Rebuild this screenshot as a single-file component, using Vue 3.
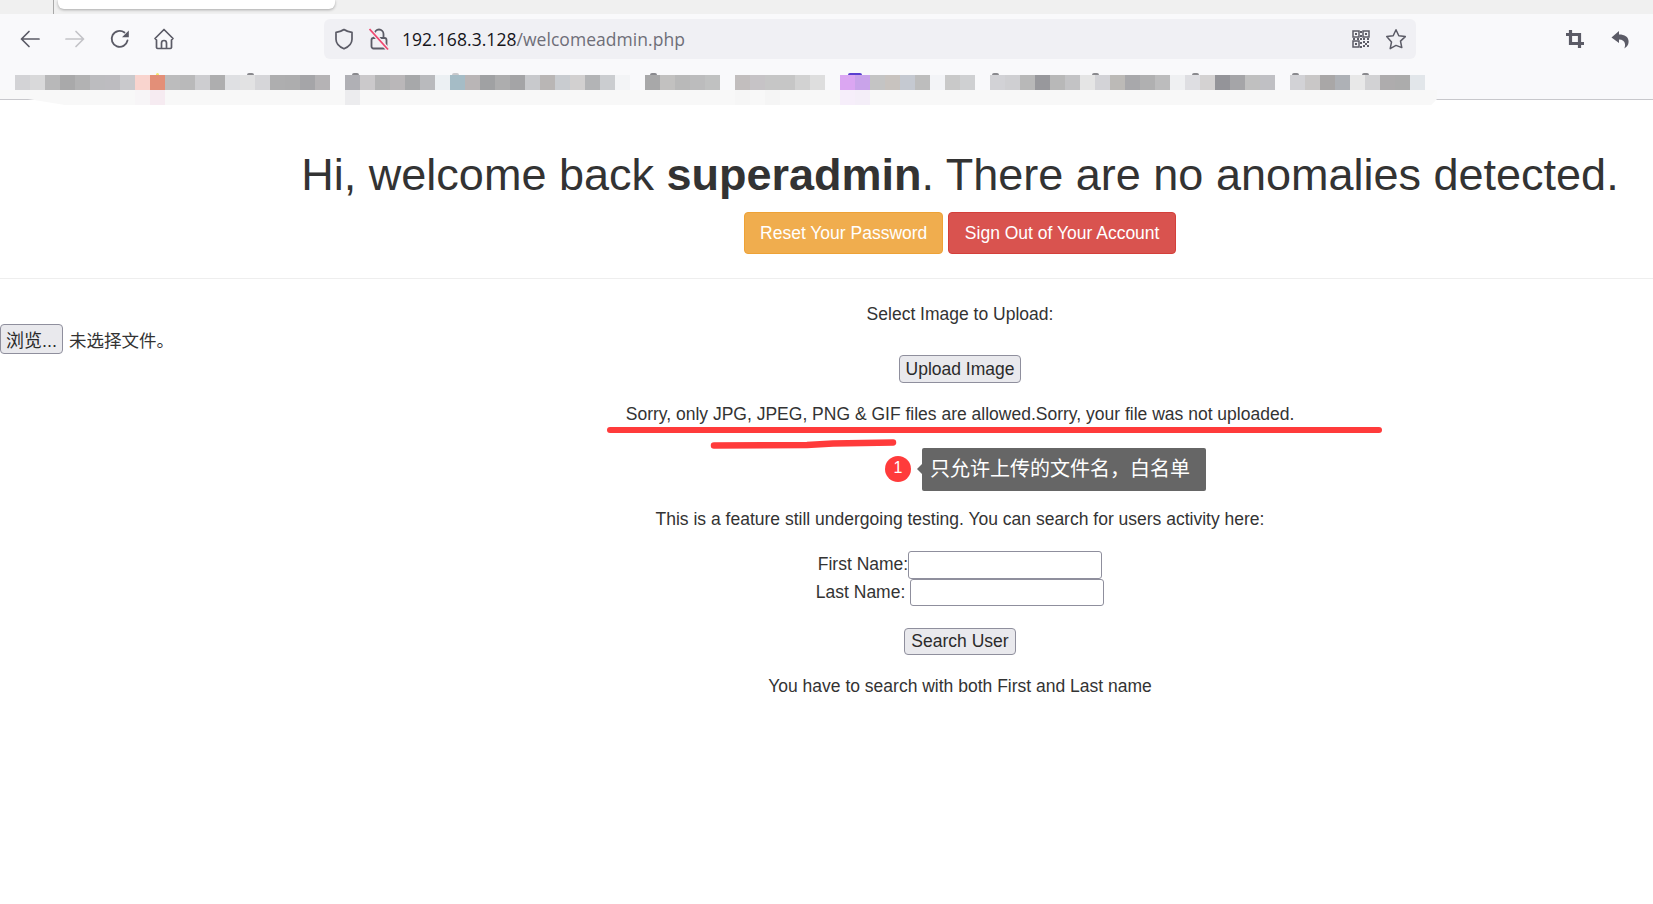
<template>
  <div class="screen">
    <div class="tab-strip">
      <span class="tab-sep"></span>
      <span class="tab"></span>
    </div>

    <header class="toolbar">
      <div class="nav-row">
        <div class="nav-btns">
          <span class="nav-btn">
            <svg width="24" height="24" viewBox="0 0 24 24" fill="none" stroke="#5b5b66" stroke-width="1.7" stroke-linecap="round" stroke-linejoin="round"><path d="M21 12H3.500M11 4.500 3.500 12l7.500 7.500" /></svg>
          </span>
          <span class="nav-btn">
            <svg width="24" height="24" viewBox="0 0 24 24" fill="none" stroke="#c3c3c8" stroke-width="1.7" stroke-linecap="round" stroke-linejoin="round"><path d="M3 12h17.500M13 4.500l7.500 7.500-7.500 7.500" /></svg>
          </span>
          <span class="nav-btn reload">
            <svg width="24" height="24" viewBox="0 0 24 24" fill="none" stroke="#5b5b66" stroke-width="1.8" stroke-linecap="round"><path d="M19.500 13.500A8 8 0 1 1 16.500 5.500" /><path d="M20.800 3.500v6.800H14z" fill="#5b5b66" stroke="none" /></svg>
          </span>
          <span class="nav-btn">
            <svg width="24" height="24" viewBox="0 0 24 24" fill="none" stroke="#5b5b66" stroke-width="1.7" stroke-linejoin="round"><path d="M12 2.500 3 11.500l1.500 1.500v7.500a1.500 1.500 0 0 0 1.500 1h12a1.500 1.500 0 0 0 1.500-1V13l1.500-1.500z" /><path d="M9.500 22v-6a2.500 2.500 0 0 1 5 0v6" /></svg>
          </span>
        </div>

        <div class="url-bar">
          <svg class="shield" width="22" height="24" viewBox="0 0 22 24" fill="none" stroke="#5b5b66" stroke-width="1.7" stroke-linejoin="round"><path d="M11 2.500c2.500 1.800 5 2.600 8 2.800v7c0 4.500-3.200 7.500-8 9.500-4.800-2-8-5-8-9.500v-7c3-.2 5.500-1 8-2.800z" /></svg>
          <svg class="lock" width="20" height="24" viewBox="0 0 20 24" fill="none" stroke-width="1.8"><path d="M5.500 11V7a4.500 4.500 0 0 1 9 0v4" stroke="#5b5b66" /><rect x="2.500" y="11" width="15" height="10.500" rx="2" stroke="#5b5b66" /><path d="M0.500 2 19 22.500" stroke="#f0f0f4" stroke-width="4" /><path d="M0.500 2 19 22.500" stroke="#ef476f" stroke-width="1.800" /></svg>
          <span class="url"><span class="url-host">192.168.3.128</span>/welcomeadmin.php</span>
          <svg class="qr" width="18" height="18" viewBox="0 0 18 18">
            <path fill="none" stroke="#5b5b66" stroke-width="1.500" d="M1 1h6v6H1zM11 1h6v6h-6zM1 11h6v6H1z" />
            <path fill="#5b5b66" d="M3 3h2v2H3zM13 3h2v2h-2zM3 13h2v2H3zM8 1h2v2H8zM8 5h2v2H8zM8 8h2v2H8zM1 8h2v2H1zM5 8h2v2H5zM11 8h2v2h-2zM15 8h2v2h-2zM8 12h2v2H8zM8 16h2v2H8zM11 11h2v2h-2zM15 11h2v2h-2zM13 13h2v2h-2zM11 15h2v2h-2zM15 15h2v2h-2z" />
          </svg>
          <svg class="star" width="22" height="22" viewBox="0 0 22 22" fill="none" stroke="#5b5b66" stroke-width="1.500" stroke-linejoin="round"><path d="m11 1.800 2.800 6 6.500.8-4.800 4.500 1.300 6.500L11 17.400l-5.800 3.200 1.300-6.500L1.700 8.600l6.500-.8z" /></svg>
        </div>

        <div class="nav-tools">
          <span class="nav-btn">
            <svg width="20" height="20" viewBox="0 0 20 20" fill="none" stroke="#5b5b66" stroke-width="3.200"><path d="M1 5.500h13.500V19M5.500 1v13.500H19" /></svg>
          </span>
          <span class="nav-btn">
            <svg width="20" height="20" viewBox="0 0 20 20" fill="#5b5b66"><path d="M9 2 1.500 8.500 9 14v-3.500c3.500 0 5.500 1.500 6 4.500.2 1.500 0 3-.8 4.500 3-1.500 4.800-4.500 4.300-8-.5-3.500-3.500-6-9.500-6z" /></svg>
          </span>
        </div>
      </div>

      <div class="bookmarks">
        <div v-for="(group, i) in bookmarkGroups" :key="i" class="bm-group">
          <span v-for="(c, j) in group" :key="j" class="bm-cell" :style="{ background: c }"></span>
        </div>
      </div>
    </header>

    <!-- strip of blur left under the bookmarks when the shot was edited -->
    <div class="blur-strip">
      <span v-for="s in stains" :key="s.x" class="stain" :style="{ left: s.x + 'px', width: s.w + 'px', background: s.c }"></span>
    </div>
    <span v-for="m in marks" :key="m.x" class="mark" :style="{ left: m.x + 'px', width: m.w + 'px', background: m.c }"></span>

    <main class="page">
      <h1 class="welcome">Hi, welcome back <b>superadmin</b>. There are no anomalies detected.</h1>
      <div class="actions">
        <a class="btn btn-warning">Reset Your Password</a>
        <a class="btn btn-danger">Sign Out of Your Account</a>
      </div>
      <hr class="rule" />

      <form class="upload" @submit.prevent>
        <p class="upload-label">Select Image to Upload:</p>
        <div class="file-row">
          <button type="button" class="native file-btn">浏览...</button>
          <span class="file-name">未选择文件。</span>
        </div>
        <button type="button" class="native upload-btn">Upload Image</button>
      </form>

      <p class="error">Sorry, only JPG, JPEG, PNG &amp; GIF files are allowed.Sorry, your file was not uploaded.</p>
      <p class="feature">This is a feature still undergoing testing. You can search for users activity here:</p>

      <form class="search" @submit.prevent>
        <div class="field first">First Name:<input type="text" /></div>
        <div class="field last">Last Name: <input type="text" /></div>
        <button type="button" class="native search-btn">Search User</button>
      </form>
      <p class="hint">You have to search with both First and Last name</p>
    </main>

    <!-- annotations drawn on top of the screenshot -->
    <svg class="scribble" width="800" height="30" viewBox="0 0 800 30" fill="none" stroke="#ff3b3b" stroke-linecap="round">
      <path d="M3 5H772" stroke-width="6" />
      <path d="M107 20.500 200 20 226 18.500 286 17.500" stroke-width="6.500" />
    </svg>
    <span class="badge">1</span>
    <div class="note">只允许上传的文件名，白名单</div>
  </div>
</template>

<script setup>
const bookmarkGroups = [
  ['#d3d3d6', '#d9d9da', '#b8b8b9', '#a9a9aa', '#b2b2b3', '#bcbcbf', '#bdbcc0', '#c9c9cc', '#f9d4ce', '#e38f78', '#bcbcbd', '#b9b9ba', '#cdcdd0', '#aeaeaf', '#dfe0e3', '#e2e2e3', '#d6d6d9', '#aeaeaf', '#adadae', '#a5a5a8', '#b5b3b5'],
  ['#b0b0b5', '#cbc9cb', '#b4b4b5', '#bab7b9', '#a7a8aa', '#b9babd', '#ecf0f3', '#a5bcc6', '#b9b5b6', '#a0a1a3', '#adadae', '#a4a4a6', '#c8c9cc', '#b9b6b5', '#c9ccd0', '#d2d0d0', '#b3b4b6', '#cbcdd0', '#f3f4f6'],
  ['#a8a8a9', '#c2c1c0', '#b9b9b9', '#bcbcbd', '#c0c1c1'],
  ['#c2bebe', '#c6c3c6', '#c6c6c6', '#c6c6c6', '#d2d2d2', '#dedede'],
  ['#dba6f2', '#c9a3ea', '#c4c4c4', '#c8c3bf', '#c5c9d1', '#bdbdbd', '#f3f4f7', '#c9c9c9', '#cfd0d2'],
  ['#d2d2d6', '#cfcfd2', '#b8b8b8', '#98989c', '#b8b8b8', '#c3c3c5', '#e5e5e5', '#d3d3d7', '#bcbab7', '#a8a8ab', '#b0b0b1', '#bcbcbd', '#eff0f2', '#dedee2', '#d4d2d2', '#949499', '#a5a5a8', '#c0c0c0', '#c0c0c4'],
  ['#d2d2d6', '#c9c7c7', '#a9a7a7', '#aeb1b6', '#e8e8e8', '#d2d2d4', '#aeacad', '#acacac', '#e2e6ea']
]

const stains = [
  { x: 135, w: 15, c: '#f7f5f7' },
  { x: 150, w: 15, c: '#f6ebf1' },
  { x: 345, w: 15, c: '#ececee' },
  { x: 735, w: 15, c: '#f6f6f6' },
  { x: 765, w: 15, c: '#f5f5f5' },
  { x: 840, w: 15, c: '#f6eefa' },
  { x: 855, w: 15, c: '#f4eef8' }
]

const marks = [
  { x: 156, w: 3, c: '#f5e56b' },
  { x: 247, w: 7, c: '#8a8a8e' },
  { x: 352, w: 7, c: '#8a8a8e' },
  { x: 452, w: 7, c: '#c9c9cc' },
  { x: 650, w: 7, c: '#8a8a8e' },
  { x: 848, w: 14, c: '#5a3fd0' },
  { x: 992, w: 7, c: '#8a8a8e' },
  { x: 1092, w: 7, c: '#8a8a8e' },
  { x: 1192, w: 7, c: '#8a8a8e' },
  { x: 1292, w: 7, c: '#8a8a8e' },
  { x: 1362, w: 7, c: '#8a8a8e' }
]
</script>

<style scoped>
.screen {
  position: relative;
  width: 1653px;
  height: 904px;
  overflow: hidden;
  background: #fff;
  color: #333;
  font-family: "Liberation Sans", Arial, "Noto Sans CJK SC", sans-serif;
}

.tab-strip {
  display: flex;
  align-items: flex-start;
  height: 14px;
  padding-left: 53px;
  background: #f0f0f0;
}

.tab-sep {
  width: 1px;
  height: 14px;
  background: #a8a8a8;
}

.tab {
  width: 277px;
  height: 9px;
  margin-left: 4px;
  background: #fff;
  border-radius: 0 0 6px 6px;
  box-shadow: 0 1px 3px rgba(0, 0, 0, 0.3);
}

.toolbar {
  height: 86px;
  padding-top: 5px;
  box-sizing: border-box;
  background: #f9f9fb;
  border-bottom: 1px solid #c8c8cc;
}

.nav-row {
  display: flex;
  align-items: center;
  height: 40px;
}

.nav-btns {
  display: flex;
  flex: none;
  width: 316px;
  padding-left: 8px;
}

.nav-btn {
  display: flex;
  align-items: center;
  justify-content: center;
  width: 44.500px;
  height: 40px;
}

.nav-btn.reload svg {
  margin-left: 2px;
}

.url-bar {
  display: flex;
  align-items: center;
  flex: none;
  width: 1092px;
  height: 40px;
  box-sizing: border-box;
  padding: 0 9px 0 9px;
  background: #f0f0f4;
  border-radius: 6px;
}

.lock {
  margin-left: 14px;
}

.url {
  margin-left: 13px;
  flex: 1;
  font-family: "Open Sans", "Noto Sans", sans-serif;
  font-size: 17.500px;
  letter-spacing: 0.05px;
  color: #6e6e78;
  white-space: nowrap;
}

.url-host {
  color: #15141a;
}

.star {
  margin-left: 15px;
}

.nav-tools {
  display: flex;
  margin-left: 137px;
}

.bookmarks {
  display: flex;
  gap: 15px;
  margin-top: 16px;
  padding-left: 15px;
}

.bm-group {
  display: flex;
}

.bm-cell {
  width: 15px;
  height: 15px;
}

.blur-strip {
  position: absolute;
  left: 0;
  top: 90px;
  width: 1437px;
  height: 15px;
  background: #f8f8f8;
  clip-path: polygon(0 0, 100% 0, 100% 9px, 99.600% 15px, 65px 15px, 28px 9px, 0 9px);
}

.stain {
  position: absolute;
  top: 0;
  height: 15px;
}

.mark {
  position: absolute;
  top: 73px;
  height: 2px;
  border-radius: 2px 2px 0 0;
}

/* the page underneath is wider than the window, it centres on 1920px */
.page {
  width: 1920px;
  padding-top: 50px;
  text-align: center;
  font-size: 17.500px;
  line-height: 25px;
}

.welcome {
  margin: 0 0 12px;
  font-size: 45px;
  font-weight: 500;
  line-height: 50px;
  color: #333;
}

.actions {
  display: flex;
  justify-content: center;
  gap: 5px;
}

.btn {
  padding: 7.500px 15px;
  border: 1px solid transparent;
  border-radius: 4px;
  color: #fff;
  font-size: 17.500px;
  line-height: 25px;
}

.btn-warning {
  background: #f0ad4e;
  border-color: #eea236;
}

.btn-danger {
  padding: 7.500px 15.500px;
  background: #d9534f;
  border-color: #d43f3a;
}

.rule {
  margin: 24px 0 23px;
  border: 0;
  border-top: 1px solid #eee;
}

.upload-label {
  margin: 0;
}

.file-row {
  display: flex;
  align-items: center;
  gap: 6px;
  margin-top: -3px;
  text-align: left;
  height: 30px;
}

.native {
  display: block;
  box-sizing: border-box;
  padding: 0;
  border: 1px solid #8f8f9d;
  border-radius: 4px;
  background: #e9e9ed;
  color: #2b2b2b;
  font-family: inherit;
  font-size: 17.500px;
  white-space: nowrap;
}

.file-btn {
  flex: none;
  width: 63px;
  height: 30px;
  font-size: 18px;
}

.file-name {
  position: relative;
  top: 2px;
  font-size: 17.500px;
}

.upload-btn {
  width: 122px;
  height: 28px;
  margin: 1px auto 0;
}

.error {
  margin: 19px 0 0;
}

.feature {
  margin: 80px 0 0;
}

.search {
  margin-top: 19px;
}

.field {
  display: flex;
  justify-content: center;
  align-items: center;
  height: 27.500px;
  white-space: pre;
}

.field input {
  box-sizing: border-box;
  width: 194px;
  height: 27.500px;
  padding: 0;
  border: 1px solid #8f8f9d;
  border-radius: 3px;
  background: #fff;
}

.search-btn {
  width: 112px;
  height: 27px;
  margin: 22px auto 0;
}

.hint {
  margin: 19px 0 0;
}

.scribble {
  position: absolute;
  left: 607px;
  top: 425px;
}

.badge {
  position: absolute;
  left: 885px;
  top: 456px;
  width: 26px;
  height: 26px;
  border-radius: 50%;
  background: #ff3b3b;
  color: #fff;
  font-size: 16px;
  line-height: 24px;
  text-align: center;
}

.note {
  position: absolute;
  left: 922px;
  top: 448px;
  width: 284px;
  height: 43px;
  box-sizing: border-box;
  padding-left: 8px;
  border-radius: 2px;
  background: #666;
  color: #fff;
  font-size: 20px;
  line-height: 43px;
  white-space: nowrap;
}

.note::before {
  content: "";
  position: absolute;
  left: -5px;
  top: 16px;
  border-style: solid;
  border-width: 5px 5px 5px 0;
  border-color: transparent #666 transparent transparent;
}
</style>

<style>
html,
body {
  overflow: hidden;
}
</style>
